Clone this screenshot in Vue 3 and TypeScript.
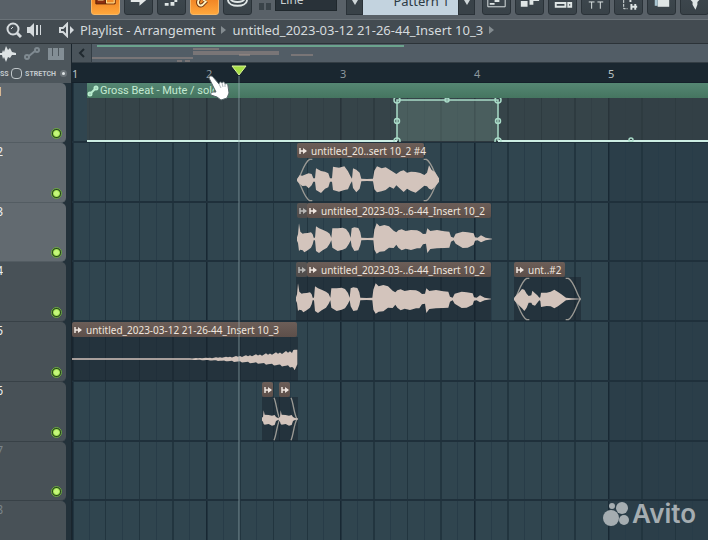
<script setup lang="ts">
import { ref } from 'vue'

type Sample = [x: number, up: number, down: number]
interface Clip {
  title: string
  left: number
  head: number
  body: number
  wave?: Sample[]
  fade?: 'both' | 'right'
  dim?: boolean
  shade?: boolean
}
interface Track { id: number; height: number; lit: boolean; faint?: boolean; clips: Clip[] }

// Samples are stored in thirds of a pixel: offset, peak above, peak below the centre line.
const phrase: Sample[] = [
  [0, 5, 5], [3, 14, 12], [6, 47, 36], [10, 22, 32], [17, 16, 34], [22, 17, 40], [32, 18, 34], [42, 20, 26], [47, 14, 16],
  [50, 4, 4], [54, 4, 4], [57, 38, 36], [66, 32, 42], [77, 28, 34], [90, 22, 26], [98, 16, 14], [103, 4, 4],
  [106, 32, 26], [122, 32, 36], [137, 34, 32], [147, 30, 28], [156, 18, 14], [161, 4, 4], [164, 32, 22],
  [172, 35, 36], [184, 33, 34], [190, 20, 18], [193, 4, 4], [212, 3, 3], [229, 4, 4], [232, 28, 32], [239, 47, 44],
  [248, 38, 38], [262, 42, 37], [276, 38, 26], [290, 25, 27], [298, 20, 17], [304, 26, 26], [314, 29, 34], [326, 24, 29],
  [342, 27, 33], [360, 26, 28], [370, 22, 28], [378, 15, 16], [387, 16, 14], [391, 32, 42], [400, 24, 30], [420, 27, 28],
  [442, 23, 27], [457, 22, 26], [462, 7, 8], [470, 4, 4], [476, 16, 14], [497, 22, 27], [512, 20, 26], [530, 17, 17],
  [534, 5, 5], [542, 4, 4], [552, 11, 10], [566, 4, 4], [585, 1, 1],
]
const phraseShort: Sample[] = [
  [0, 3, 3], [8, 14, 11], [16, 13, 18], [27, 17, 17], [35, 20, 25], [44, 18, 16], [49, 5, 5], [54, 5, 5], [57, 35, 30],
  [72, 27, 39], [84, 25, 26], [94, 20, 22], [99, 5, 5], [105, 5, 5], [108, 40, 30], [126, 37, 35], [142, 41, 30],
  [153, 26, 28], [160, 12, 12], [165, 4, 4], [168, 35, 24], [178, 31, 37], [188, 22, 26], [193, 4, 4], [210, 3, 3],
  [228, 4, 4], [232, 28, 28], [240, 41, 37], [254, 35, 34], [266, 38, 30], [278, 31, 20], [290, 23, 26], [298, 18, 16],
  [310, 26, 27], [320, 29, 36], [330, 22, 26], [342, 25, 33], [356, 24, 38], [370, 21, 27], [382, 15, 17], [390, 22, 19],
  [396, 44, 26], [404, 30, 29], [414, 24, 20], [424, 8, 8], [430, 0, 0],
]
const tail: Sample[] = [
  [0, 3, 3], [8, 12, 12], [16, 20, 20], [24, 30, 28], [31, 28, 36], [38, 16, 26], [44, 9, 11], [52, 11, 11], [55, 25, 17],
  [63, 17, 20], [70, 11, 11], [76, 4, 4], [79, 5, 6], [81, 19, 24], [98, 19, 21], [110, 22, 22], [121, 28, 28],
  [132, 21, 22], [142, 14, 14], [156, 4, 4], [172, 2, 2], [200, 1, 1],
]
const hit: Sample[] = [
  [0, 5, 5], [3, 5, 8], [5, 26, 15], [8, 13, 17], [20, 12, 15], [30, 10, 20], [38, 12, 18], [42, 6, 6], [48, 3, 3], [58, 1, 1],
]
const riser: Sample[] = Array.from({ length: 114 }, (_, i): Sample => {
  const x = i * 6
  const t = Math.max(0, (x - 320) / 355)
  const level = 2 + 22 * t * t
  const ripple = t * ((i * 7) % 5 - 2) * 2
  return [x, level + ripple, level + ((i * 3) % 4 - 1) * t * 2]
})
riser[111] = [664, 27, 26]
riser[112] = [668, 28, 34]
riser[113] = [676, 28, 16]

const long = 'untitled_2023-03-..6-44_Insert 10_2'
const tracks: Track[] = [
  { id: 1, height: 60, lit: true, clips: [] },
  { id: 2, height: 60, lit: true, clips: [
    { title: 'untitled_20..sert 10_2 #4', left: 225, head: 127, body: 142, wave: phraseShort, fade: 'both' },
  ] },
  { id: 3, height: 59, lit: true, clips: [
    { title: '', left: 225, head: 11, body: 11, dim: true },
    { title: long, left: 235, head: 184, body: 184 },
    { title: '', left: 225, head: 0, body: 195, wave: phrase },
  ] },
  { id: 4, height: 60, lit: false, clips: [
    { title: '', left: 224, head: 11, body: 11, dim: true },
    { title: long, left: 235, head: 184, body: 184 },
    { title: '', left: 224, head: 0, body: 195, wave: phrase, shade: true },
    { title: 'unt..#2', left: 442, head: 51, body: 67, wave: tail, fade: 'both', shade: true },
  ] },
  { id: 5, height: 60, lit: false, clips: [
    { title: 'untitled_2023-03-12 21-26-44_Insert 10_3', left: 0, head: 225, body: 226, wave: riser, shade: true },
  ] },
  { id: 6, height: 60, lit: false, clips: [
    { title: '', left: 190, head: 11, body: 18, wave: hit, fade: 'right', shade: true },
    { title: '', left: 207, head: 11, body: 19, wave: hit, fade: 'right', shade: true },
  ] },
  { id: 7, height: 59, lit: false, faint: true, clips: [] },
  { id: 8, height: 60, lit: false, faint: true, clips: [] },
]
const bars = [1, 2, 3, 4, 5]
const enabled = ref<boolean[]>(tracks.map(() => true))
const snap = ref('Line')
const cross = ref(false)
const stretch = ref(true)

function outline(s: Sample[]): string {
  const top = s.map(([x, up]) => `${x} ${66 - up}`)
  const bottom = [...s].reverse().map(([x, , down]) => `${x} ${66 + down}`)
  return `M${top.join('L')}L${bottom.join('L')}Z`
}
</script>

<template>
  <main class="daw">
    <header class="toolbar">
      <div class="group tools">
        <button class="tool on" type="button" aria-label="Playlist">
          <svg width="28" height="28" viewBox="0 0 28 28"><path d="M4 8h10v9H4z" fill="#8c2d10"/><path d="M4 8v9h20V8M14 8v9" stroke="#5c2008" fill="none"/><path d="M6 13h6M15 8h8v8h-8z" stroke="#ffe79a" fill="#f08a28"/></svg>
        </button>
        <button class="tool" type="button" aria-label="Step">
          <svg width="28" height="28" viewBox="0 0 28 28"><path d="M6 11h9V6l7 7-7 6v-4H6z" fill="#e4e8e8"/></svg>
        </button>
        <button class="tool" type="button" aria-label="Note">
          <svg width="28" height="28" viewBox="0 0 28 28"><path d="M7 16h4v3H7zM13 15h4v4h-4zM17 8h3v7h-3z" fill="#dfe5e5"/></svg>
        </button>
        <button class="tool on" type="button" aria-label="Link">
          <svg width="28" height="28" viewBox="0 0 28 28"><path d="M11 8l-3 5c-2 4 1 7 4 5l4-4M13 14l4-6" stroke="#6d3310" stroke-width="4" fill="none"/><path d="M11 8l-3 5c-2 4 1 7 4 5l4-4M13 14l4-6" stroke="#fff3c0" stroke-width="2" fill="none"/></svg>
        </button>
        <button class="tool" type="button" aria-label="Render">
          <svg width="28" height="28" viewBox="0 0 28 28"><path d="M4 13c1 8 19 8 20 0" stroke="#dfe5e5" stroke-width="2" fill="none"/><ellipse cx="14" cy="12" rx="7" ry="3" fill="none" stroke="#dfe5e5" stroke-width="2"/></svg>
        </button>
      </div>
      <svg class="grip" width="12" height="12" viewBox="0 0 12 12"><path d="M0 0h5v7H0zM7 0h5v7H7z" fill="#3a4349"/></svg>
      <label class="snap"><select v-model="snap" aria-label="Snap"><option>Line</option><option>Beat</option></select>
        <svg width="8" height="6" viewBox="0 0 8 6"><path d="M1 0l3 3 3-3" stroke="#aab2b5" fill="none"/></svg>
      </label>
      <div class="group pattern">
        <button class="step" type="button" aria-label="Previous pattern"><svg width="6" height="6" viewBox="0 0 6 6"><path d="M0 0h6L3 5z" fill="#cfd6d8"/></svg></button>
        <button class="name" type="button">Pattern 1</button>
        <button class="step" type="button" aria-label="Next pattern"><svg width="6" height="6" viewBox="0 0 6 6"><path d="M0 0h6L3 5z" fill="#cfd6d8"/></svg></button>
      </div>
      <div class="group views">
        <button class="tool" type="button" aria-label="View playlist"><svg width="28" height="28" viewBox="0 0 28 28"><path d="M5 6v14h18V6" fill="none" stroke="#dfe5e5"/><path d="M7 17h5M12 14h5M18 12h4" fill="none" stroke="#dfe5e5" stroke-width="2"/></svg></button>
        <button class="tool" type="button" aria-label="View piano roll"><svg width="28" height="28" viewBox="0 0 28 28"><path d="M5 14h7v6H5zM14 12h4v6h-4zM18 11h6v3h-6z" fill="#dfe5e5"/></svg></button>
        <button class="tool" type="button" aria-label="View channel rack"><svg width="28" height="28" viewBox="0 0 28 28"><path d="M7 9h10v3H7zM7 16h10v4H7zM20 9h3v3h-3zM20 16h3v4h-3z" fill="none" stroke="#dfe5e5" stroke-width="2"/></svg></button>
        <button class="tool" type="button" aria-label="View mixer"><svg width="28" height="28" viewBox="0 0 28 28"><path d="M10 15v7M19 15v7M7 15h6M16 15h6M8 7v5h4V7M17 7v5h4V7" stroke="#dfe5e5" fill="none"/></svg></button>
        <button class="tool" type="button" aria-label="View browser"><svg width="28" height="28" viewBox="0 0 28 28"><path d="M13 9H9v13h4" stroke="#dfe5e5" stroke-dasharray="3 1" fill="none"/><path d="M16 10v5M17 17v6M22 10v3M21 17v6M17 12h6M17 20h6" stroke="#dfe5e5" stroke-width="2" fill="none"/></svg></button>
        <button class="tool" type="button" aria-label="Plugin picker"><svg width="28" height="28" viewBox="0 0 28 28"><path d="M10 6h12v14H10z" fill="#dfe5e5"/><path d="M7 11v8h3v-8z" fill="#a8c4d0"/></svg></button>
        <button class="tool" type="button" aria-label="Tools"><svg width="28" height="28" viewBox="0 0 28 28"><path d="M10 8h9v5l-2 2v3l-2 5-3-5v-3l-2-2z" fill="#dfe5e5"/></svg></button>
      </div>
    </header>

    <nav class="titlebar">
      <button class="plain" type="button" aria-label="Zoom"><svg width="16" height="16" viewBox="0 0 16 16" fill="none" stroke="#d5dadd" stroke-width="2"><circle cx="7" cy="7" r="5.500"/><path d="M11 11l4 4" stroke-width="3"/><path d="M5 7l2-2" stroke-width="1"/></svg></button>
      <button class="plain scrub" type="button" aria-label="Preview"><svg width="17" height="16" viewBox="0 0 17 16" fill="#d5dadd"><path d="M1 5h3l4-4v14l-4-4H1zM10 3h2v10h-2zM14 3h1v10h-1z"/></svg></button>
      <button class="plain speaker" type="button" aria-label="Output"><svg width="16" height="16" viewBox="0 0 16 16"><path d="M1 6h3l4-4v12l-4-4H1z" fill="none" stroke="#d5dadd" stroke-width="2"/><path d="M11 4l4 4-4 4z" fill="#d5dadd"/></svg></button>
      <h1>Playlist - Arrangement</h1>
      <span class="crumb"></span>
      <span class="file">untitled_2023-03-12 21-26-44_Insert 10_3</span>
      <span class="crumb"></span>
    </nav>

    <div class="body">
      <aside class="panel">
        <div class="modes">
          <button class="plain" type="button" aria-label="Audio clips"><svg width="16" height="16" viewBox="0 0 16 16"><path d="M0 7h2l1-3 1 2 2-6 2 4 2-2 2 4 4 1v2l-4 0-2 3-2-1-2 5-2-5-1 2-1-4H0z" fill="#dde2e4"/></svg></button>
          <button class="plain" type="button" aria-label="Automation clips"><svg width="18" height="14" viewBox="0 0 18 14" fill="none" stroke="#7f8a91" stroke-width="2"><circle cx="4" cy="10" r="2"/><circle cx="14" cy="3" r="2"/><path d="M6 9l6-5"/></svg></button>
          <button class="plain" type="button" aria-label="Pattern clips"><svg width="16" height="12" viewBox="0 0 16 12"><path d="M0 0h4v8h1V0h5v8h1V0h5v12H0z" fill="#838e95"/></svg></button>
        </div>
        <div class="options">
          <label>SS<input v-model="cross" type="checkbox"></label>
          <label>STRETCH<input v-model="stretch" type="checkbox" class="dot"></label>
        </div>
        <ol class="heads">
          <li v-for="(t, i) in tracks" :key="t.id" :class="{ lit: t.lit, faint: t.faint }" :style="{ height: t.height + 'px' }">
            <span class="number">{{ t.id }}</span>
            <input v-model="enabled[i]" type="checkbox" class="led" :aria-label="'Enable ' + t.id">
          </li>
        </ol>
      </aside>

      <section class="arrangement">
        <div class="overview">
          <button class="back" type="button" aria-label="Scroll left"><svg width="8" height="10" viewBox="0 0 8 10"><path d="M6 1L2 5l4 4" fill="none" stroke="#20292f" stroke-width="2"/></svg></button>
          <svg class="map" width="330" height="18" viewBox="0 0 330 18">
            <path d="M5 2h307" stroke="#6ba38d" stroke-width="2"/>
            <path d="M101 5h26M101 8h86M101 10h86M0 14h101M147 11h11M199 11h22M85 17h5M93 17h5" stroke="#a08f88"/>
          </svg>
        </div>
        <div class="ruler"><span v-for="b in bars" :key="b" :class="{ major: b % 4 === 1 }">{{ b }}</span></div>

        <div class="lanes">
          <div v-for="t in tracks" :key="t.id" class="lane" :style="{ height: t.height + 'px' }">
            <div v-if="t.id === 1" class="automation">
              <div class="autohead">
                <svg width="12" height="12" viewBox="0 0 12 12" fill="none" stroke="#b9edcf" stroke-width="2"><circle cx="3" cy="9" r="1.500"/><circle cx="9" cy="3" r="1.500"/><path d="M4 8l4-4"/></svg>
                Gross Beat - Mute / solo
              </div>
              <svg class="curve" height="45" width="1200" viewBox="0 0 1200 45">
                <path d="M310 2h101v41H310z" fill="#6f8f88" fill-opacity="0.350"/>
                <g fill="none" stroke="#a9dbc8">
                  <path d="M310 43V2h101v41" stroke-width="1.500"/>
                  <path d="M0 43h310M411 43h800" stroke="#cdeee4" stroke-width="2"/>
                  <g stroke-width="1.500"><circle cx="310" cy="2" r="3"/><circle cx="310" cy="23" r="2.500"/><circle cx="310" cy="43" r="3"/><circle cx="411" cy="2" r="3"/><circle cx="411" cy="23" r="2.500"/><circle cx="411" cy="43" r="3"/><circle cx="360" cy="2" r="2"/><circle cx="544" cy="42" r="2"/></g>
                </g>
              </svg>
            </div>
            <article v-for="(c, i) in t.clips" :key="i" class="clip" :class="{ shade: c.shade }" :style="{ left: c.left + 'px', width: c.body + 'px' }">
              <div v-if="c.head" class="cliphead" :class="{ dim: c.dim }" :style="{ width: c.head + 'px' }">
                <svg width="8" height="8" viewBox="0 0 8 8"><path d="M1 1v6M1 4h6" stroke="#f0e6df" fill="none" stroke-width="1.500"/><path d="M4 1l4 3-4 3z" fill="#f0e6df"/></svg>
                <span v-if="c.title">{{ c.title }}</span>
              </div>
              <svg v-if="c.wave" class="wave" :width="c.body" height="44" :viewBox="`0 0 ${c.body * 3} 132`">
                <g v-if="c.fade" fill="none" stroke="#9b9a95" stroke-width="4">
                  <path v-if="c.fade === 'both'" d="M46 4h-8C20 14 14 50 2 66c12 16 18 52 36 62h8"/>
                  <path v-if="c.fade === 'both'" :transform="`translate(${c.body * 3} 0) scale(-1 1)`" d="M46 4h-8C20 14 14 50 2 66c12 16 18 52 36 62h8"/>
                  <path v-else d="M36 2c8 18 8 46 18 64c-10 18-10 46-18 64"/>
                </g>
                <path :d="outline(c.wave)" fill="#d3c4bc"/>
              </svg>
            </article>
          </div>
        </div>
        <div class="playhead"><svg width="16" height="11" viewBox="0 0 16 11"><path d="M1 1h14L8 10z" fill="#a6df45" stroke="#dbf59b"/></svg></div>
      </section>
    </div>

    <svg class="cursor" width="22" height="26" viewBox="0 0 22 26"><path d="M1 3c0-2 2-3 4-1l6 7c0-2 2-3 3-1 1-2 3-1 3 1 2-1 3 0 3 2l1 7-2 5-6 2-4-3-6-2c-1-2 1-3 3-3l2 0z" fill="#fff" stroke="#56666a"/><path d="M11 9l2 4M14 8l1 4M17 9v3" fill="none" stroke="#aeb7ba"/></svg>
    <div class="watermark">
      <svg width="26" height="24" viewBox="0 0 26 24" fill="currentColor"><circle cx="19" cy="6" r="6"/><circle cx="8" cy="16" r="8"/><circle cx="9" cy="4" r="3"/><circle cx="21" cy="18" r="5"/></svg>
      <span>Avito</span>
    </div>
  </main>
</template>

<style>
body { background: #2e424d; }
html, body { overflow: hidden; }
</style>
<style scoped>
* { box-sizing: border-box; }
.daw { position: relative; height: 100vh; display: flex; flex-direction: column; overflow: hidden; background: #2e424d; color: #d5dadd; font-family: "Noto Sans", "Open Sans", sans-serif; }
button { border: 0; padding: 0; color: inherit; font: inherit; display: flex; align-items: center; justify-content: center; }
.toolbar { flex: none; height: 20px; display: flex; align-items: flex-end; padding: 0 0 4px 91px; background: #596168; border-bottom: 1px solid #6a7278; overflow: hidden; }
.group { display: flex; gap: 4px; flex: none; }
.tool { width: 29px; height: 28px; border-radius: 3px; background: linear-gradient(#3f4950, #394248); border: 1px solid #2a3238; }
.tool.on { background: linear-gradient(#e56a12, #ffa73c); border-color: #f6b765; }
.grip { margin: 0 4px 0 7px; flex: none; }
.snap { display: flex; align-items: center; width: 62px; height: 32px; margin-bottom: 4px; padding: 0 4px 0 0; background: #293239; border: 1px solid #1f272c; flex: none; overflow: hidden; }
.snap select { appearance: none; flex: 1; min-width: 0; height: 30px; padding: 8px 0 0 4px; border: 0; background: none; color: #c9d0d3; font: 12px "Noto Sans", sans-serif; }
.snap svg { margin-top: 10px; }
.pattern { margin-left: 9px; gap: 0; }
.step { width: 17px; height: 28px; background: #394248; border: 1px solid #2a3238; padding-top: 4px; }
.name { width: 95px; height: 28px; padding: 0 0 0 22px; background: #c3d3df; color: #2c3a44; font-size: 13px; }
.views { margin-left: 7px; }
.titlebar { flex: none; height: 24px; display: flex; align-items: center; padding: 0 6px 3px; background: #434b51; border-bottom: 1px solid #2c3338; }
.plain { background: none; }
.scrub { margin-left: 4px; }
.speaker { margin-left: 16px; }
h1 { margin: 0 0 0 5px; font-size: 13px; line-height: 20px; font-weight: 400; white-space: nowrap; }
.file { font-size: 13px; line-height: 20px; white-space: nowrap; }
.crumb { flex: none; margin: 0 6px; border: solid transparent; border-width: 4px 0 4px 5px; border-left-color: #838b8f; }
.body { flex: 1; min-height: 0; display: flex; }
.panel { flex: none; width: 72px; display: flex; flex-direction: column; background: #4d565c; border-right: 1px solid #1a252d; }
.modes { height: 20px; display: flex; align-items: center; justify-content: space-between; padding-right: 7px; }
.options { height: 19px; display: flex; align-items: center; justify-content: space-between; padding-right: 4px; font: 700 7px Roboto, sans-serif; color: #c4cacd; }
.options label { display: flex; align-items: center; gap: 2px; }
.options input { appearance: none; width: 11px; height: 11px; margin: 0; border: 1px solid #bfc6c9; border-radius: 4px; }
.options .dot { width: 7px; height: 7px; margin-left: 2px; border: 2px solid #6b7378; border-radius: 50%; background: #dfe4e6; }
.heads { flex: 1; min-height: 0; margin: 0; padding: 0; list-style: none; background: #23313a; overflow: hidden; }
.heads li { width: 66px; display: flex; justify-content: space-between; align-items: flex-end; padding: 0 4px 3px 0; background: #485157; border-bottom: 1px solid #384147; border-radius: 0 5px 5px 0; }
.heads .lit { background: #626a70; border-bottom-color: #535c62; }
.number { align-self: flex-start; width: 3px; display: flex; justify-content: flex-end; overflow: hidden; font-size: 12px; line-height: 18px; color: #eceff0; }
.faint .number { color: #7b858b; }
.led { appearance: none; width: 11px; height: 11px; margin: 0; border-radius: 50%; background: #2b4a1d; border: 1px solid #69a93c; }
.led:checked { background: radial-gradient(circle, #c6f77c 0 2px, #a2e450 3px, #27421d 4px); }
.arrangement { position: relative; flex: 1; min-width: 0; display: flex; flex-direction: column; overflow: hidden; }
.overview { flex: none; height: 19px; display: flex; background: #525d66; border-bottom: 1px solid #333d44; }
.back { width: 20px; background: #4a545b; border-right: 1px solid #333d44; }
.map { flex: none; }
.ruler { flex: none; height: 20px; display: flex; background: #1a2730; border-bottom: 1px solid #14202a; }
.ruler span { flex: none; width: 134px; font: 11px/21px "Noto Sans", sans-serif; color: #8d989e; }
.ruler .major { color: #bac3c7; }
.lanes { flex: 1; min-height: 0; overflow: hidden; background:
  repeating-linear-gradient(90deg, #182833 0 1px, #22343f 1px 2px, transparent 2px 134px),
  repeating-linear-gradient(90deg, #22353f 0 1px, transparent 1px calc(134px / 4)),
  repeating-linear-gradient(90deg, #283c48 0 1px, transparent 1px calc(134px / 8)),
  linear-gradient(90deg, #30454f 536px, #2b3e49 536px); }
.lane { position: relative; border-bottom: 2px solid #1f303b; }
.automation { position: absolute; inset: 0 0 -1px 15px; background: rgba(62, 66, 66, 0.450); overflow: hidden; }
.autohead { height: 15px; display: flex; align-items: center; gap: 1px; background: linear-gradient(#558773, #457560); color: #c4ead2; font: 11px/14px Roboto, sans-serif; white-space: nowrap; }
.curve { display: block; }
.clip { position: absolute; top: 0; bottom: -1px; display: flex; flex-direction: column; }
.shade::before { content: ""; position: absolute; inset: 15px 0 0; background: rgba(24, 34, 44, 0.500); }
.cliphead { position: relative; height: 15px; display: flex; align-items: center; gap: 4px; padding: 0 2px; border-radius: 2px; background: linear-gradient(#6c5e58, #5d4f4a); color: #efe5de; font: 10px/14px "Noto Sans", sans-serif; white-space: nowrap; }
.cliphead svg { flex: none; }
.dim { opacity: 0.700; }
.wave { position: relative; display: block; margin-top: auto; }
.playhead { position: absolute; top: 21px; bottom: 0; left: 159px; width: 16px; display: flex; flex-direction: column; align-items: center; }
.playhead::after { content: ""; width: 2px; flex: 1; background: rgba(150, 172, 178, 0.350); }
.cursor { position: absolute; left: 208px; top: 75px; }
.watermark { position: absolute; right: 12px; bottom: 12px; display: flex; align-items: center; gap: 3px; color: #a5adb1; font: 600 26px/28px Inter, sans-serif; }
</style>
